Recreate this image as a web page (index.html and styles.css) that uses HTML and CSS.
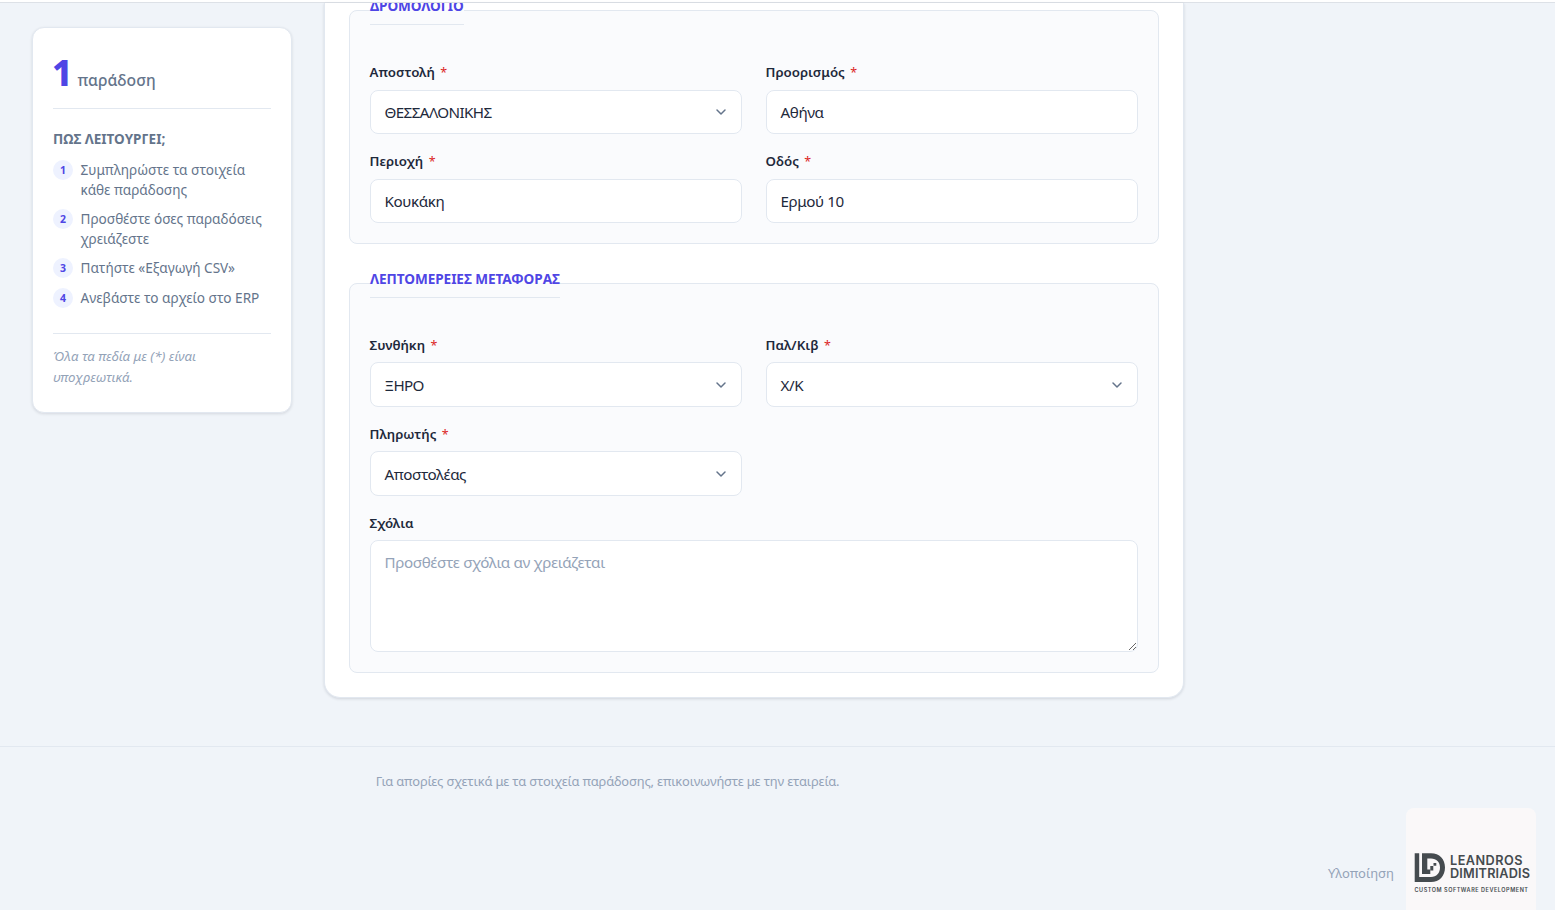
FILE: index.html
```html
<!DOCTYPE html>
<html lang="el">
<head>
<meta charset="utf-8">
<title>Παράδοση</title>
<link rel="stylesheet" href="styles.css">
</head>
<body>
<div class="topbar"></div>
<main class="layout">
  <aside class="sidebar">
    <div class="counter"><span class="counter-num">1</span><span class="counter-label">παράδοση</span></div>
    <h2 class="help-title">ΠΩΣ ΛΕΙΤΟΥΡΓΕΙ;</h2>
    <ol class="steps">
      <li class="step"><span class="badge">1</span><span class="step-text">Συμπληρώστε τα στοιχεία κάθε παράδοσης</span></li>
      <li class="step"><span class="badge">2</span><span class="step-text">Προσθέστε όσες παραδόσεις χρειάζεστε</span></li>
      <li class="step"><span class="badge">3</span><span class="step-text">Πατήστε «Εξαγωγή CSV»</span></li>
      <li class="step"><span class="badge">4</span><span class="step-text">Ανεβάστε το αρχείο στο ERP</span></li>
    </ol>
    <p class="note">Όλα τα πεδία με (*) είναι υποχρεωτικά.</p>
  </aside>
  <section class="card">
    <fieldset class="group">
      <legend class="legend">ΔΡΟΜΟΛΟΓΙΟ</legend>
      <div class="grid">
        <label class="field"><span class="label">Αποστολή <b class="req">*</b></span>
          <span class="control"><span class="caps">ΘΕΣΣΑΛΟΝΙΚΗΣ</span><svg class="chev" viewBox="0 0 12 8"><path d="M2 2l4 4 4-4"/></svg></span></label>
        <label class="field"><span class="label">Προορισμός <b class="req">*</b></span>
          <span class="control"><span>Αθήνα</span></span></label>
        <label class="field"><span class="label">Περιοχή <b class="req">*</b></span>
          <span class="control"><span>Κουκάκη</span></span></label>
        <label class="field"><span class="label">Οδός <b class="req">*</b></span>
          <span class="control"><span>Ερμού 10</span></span></label>
      </div>
    </fieldset>
    <fieldset class="group details">
      <legend class="legend">ΛΕΠΤΟΜΕΡΕΙΕΣ ΜΕΤΑΦΟΡΑΣ</legend>
      <div class="grid">
        <label class="field"><span class="label">Συνθήκη <b class="req">*</b></span>
          <span class="control"><span class="caps">ΞΗΡΟ</span><svg class="chev" viewBox="0 0 12 8"><path d="M2 2l4 4 4-4"/></svg></span></label>
        <label class="field"><span class="label">Παλ/Κιβ <b class="req">*</b></span>
          <span class="control"><span>Χ/Κ</span><svg class="chev" viewBox="0 0 12 8"><path d="M2 2l4 4 4-4"/></svg></span></label>
        <label class="field"><span class="label">Πληρωτής <b class="req">*</b></span>
          <span class="control"><span>Αποστολέας</span><svg class="chev" viewBox="0 0 12 8"><path d="M2 2l4 4 4-4"/></svg></span></label>
        <label class="field wide"><span class="label">Σχόλια</span>
          <textarea class="area" placeholder="Προσθέστε σχόλια αν χρειάζεται"></textarea></label>
      </div>
    </fieldset>
  </section>
</main>
<footer class="footer">
  <p class="contact">Για απορίες σχετικά με τα στοιχεία παράδοσης, επικοινωνήστε με την εταιρεία.</p>
  <div class="credit">
    <span class="credit-text">Υλοποίηση</span>
    <svg class="logo" viewBox="0 0 130 130">
      <rect width="130" height="130" rx="8" fill="#faf8f9"/>
      <g fill="#454b4f">
        <path d="M8.700 45.300h4.500V69H25c5.500 0 9-4 9-9.500S30.500 50.500 25 50.500h-3.700V61.500h3V66h-8.300V45.300h9C33.500 45.300 39 51 39 59.500S33.500 74 25 74H8.700z"/>
        <path d="M24.300 58h3v4.500h-3zM27.500 55h2.800v2.800h-2.800z"/>
      </g>
      <g class="brand">
        <text x="44" y="57" textLength="72.500">LEANDROS</text>
        <text x="44" y="70" textLength="80">DIMITRIADIS</text>
      </g>
      <text class="tagline" x="8.500" y="84" textLength="113.500">CUSTOM SOFTWARE DEVELOPMENT</text>
    </svg>
  </div>
</footer>
</body>
</html>
```
FILE: styles.css
```css
* { box-sizing: border-box; }
body { margin: 0; height: 910px; overflow: hidden; background: #f0f4f9; color: #1e293b; font-family: "Noto Sans", sans-serif; font-size: 15px; }
.topbar { height: 3px; background: #fff; border-bottom: 1px solid #dde1e7; }
.layout { display: flex; align-items: flex-start; gap: 32px; padding: 0 32px; height: 743px; }
.sidebar { width: 260px; height: 386px; margin-top: 24px; padding: 24px 20px 0; background: #fff; border: 1px solid #e2e8f0; border-radius: 12px; box-shadow: 0 1px 3px rgba(15,23,42,.12); }
.counter { display: flex; align-items: baseline; gap: 5px; height: 57px; border-bottom: 1px solid #e2e8f0; line-height: 40px; }
.counter-num { margin-left: -1px; color: #4f46e5; font-size: 35.500px; font-weight: 800; }
.counter-label { color: #64748b; font-size: 15.700px; font-weight: 500; }
.help-title { margin: 20px 0 11px; color: #64748b; font-size: 13.500px; line-height: 20px; font-weight: 700; letter-spacing: 0; }
.steps { list-style: none; margin: 0; padding: 0; display: flex; flex-direction: column; gap: 10px; }
.step { display: flex; gap: 8px; color: #64748b; font-size: 13.600px; line-height: 19.500px; }
.step-text { width: 184px; margin-left: -.5px; }
.badge { flex: none; width: 20px; height: 20px; margin-bottom: -1px; border-radius: 50%; background: #eef2ff; color: #4f46e5; font-size: 10.500px; font-weight: 700; line-height: 20px; text-align: center; }
.note { margin: 26px 0 0; padding: 12px 50px 0 0; border-top: 1px solid #e2e8f0; color: #94a3b8; font-size: 13.300px; line-height: 21px; font-style: italic; letter-spacing: 0; }
.card { width: 860px; height: 695px; padding: 0 24px; overflow: hidden; background: #fff; border: 1px solid #e2e8f0; border-top: 0; border-radius: 0 0 16px 16px; box-shadow: 0 1px 3px rgba(15,23,42,.14); }
.group { min-width: 0; margin: 0 0 25px; padding: 32px 20px 20px; border: 1px solid #e2e8f0; border-radius: 8px; background: #fafbfd; }
.group:first-child { margin-top: -7px; }
.legend { height: 29px; padding: 0; border-bottom: 1px solid #e2e8f0; color: #4f46e5; font-size: 13.600px; line-height: 19px; font-weight: 700; letter-spacing: -.07px; }
.grid { display: grid; grid-template-columns: 372px 372px; gap: 17px 24px; padding-top: 5px; }
.field { display: flex; flex-direction: column; gap: 8px; }
.details .field { gap: 7px; }
.details .grid { row-gap: 17px; }
.wide { grid-column: 1 / -1; }
.label { height: 20px; margin-left: -.5px; font-size: 13.300px; line-height: 20px; font-weight: 600; }
.req { margin-left: 2px; color: #dc2626; font-size: 12.500px; line-height: 1; font-weight: 400; }
.control { display: flex; align-items: center; justify-content: space-between; height: 44px; padding: 0 14px 0 13.500px; background: #fff; border: 1px solid #e2e8f0; border-radius: 8px; font-size: 15.200px; letter-spacing: -.4px; }
.caps { letter-spacing: -.6px; }
.details .control { height: 45px; }
.chev { width: 12px; height: 8px; fill: none; stroke: #64748b; stroke-width: 1.500; stroke-linecap: round; stroke-linejoin: round; }
.area { display: block; width: 100%; height: 112px; padding: 10px 14px 10px 13.500px; border: 1px solid #e2e8f0; border-radius: 8px; background: #fff; font: 15.200px/22px "Noto Sans", sans-serif; letter-spacing: -.35px; resize: vertical; }
.area::placeholder { color: #94a3b8; }
.footer { height: 164px; border-top: 1px solid #e2e8f0; }
.contact { width: 1215px; margin: 0; padding-top: 24px; color: #94a3b8; font-size: 12.900px; line-height: 21px; letter-spacing: -.15px; text-align: center; }
.credit { display: flex; justify-content: flex-end; gap: 12px; margin-top: 16px; padding-right: 19px; }
.credit-text { padding-top: 55px; color: #94a3b8; font-size: 13px; line-height: 20px; }
.logo { flex: none; width: 130px; height: 130px; }
.brand { fill: #454b4f; font: 600 12.700px Inter, sans-serif; }
.tagline { fill: #454b4f; font: 600 5.500px Inter, sans-serif; }
```
